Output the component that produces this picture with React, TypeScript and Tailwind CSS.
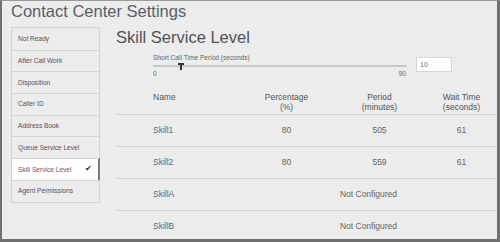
import React from "react";

const navItems = [
  "Not Ready",
  "After Call Work",
  "Disposition",
  "Caller ID",
  "Address Book",
  "Queue Service Level",
  "Skill Service Level",
  "Agent Permissions",
];

const rows: { name: string; pct?: string; period?: string; wait?: string }[] = [
  { name: "Skill1", pct: "80", period: "505", wait: "61" },
  { name: "Skill2", pct: "80", period: "559", wait: "61" },
  { name: "SkillA" },
  { name: "SkillB" },
];

export default function App() {
  return (
    <div
      className="w-[500px] h-[242px] bg-[#ececec] border-t border-t-[#9a9a9a] border-l-2 border-r-[3px] border-b-[3px] border-l-[#707070] border-r-[#707070] border-b-[#707070] overflow-hidden text-[#555]"
      style={{ fontFamily: '"Liberation Sans", Arial, sans-serif' }}
    >
      <div className="pl-[9px] pt-[1px] text-[16.5px] leading-[19px] text-[#56606a]">
        Contact Center Settings
      </div>
      <div className="flex mt-[6px]">
        <div className="ml-[9px] w-[89px] shrink-0 self-start border border-[#d2d2d2] border-r-0">
          {navItems.map((item, i) => {
            const active = item === "Skill Service Level";
            return (
              <div
                key={item}
                className={
                  "h-[21.7px] flex items-center justify-between pl-[6px] pr-[6px] text-[6.6px] " +
                  (i > 0 ? "border-t border-[#d6d6d6] " : "") +
                  (active
                    ? "bg-white text-[#6b5566] border-r-2 border-r-[#7a7a7a]"
                    : "text-[#5d4d5a] border-r border-r-[#d2d2d2]")
                }
              >
                <span>{item}</span>
                {active && <span className="text-[8px] text-[#222]">✔</span>}
              </div>
            );
          })}
        </div>
        <div className="flex-1 ml-[16px]">
          <div className="text-[16.5px] leading-[19px] text-[#4d5359] mt-[1px]">Skill Service Level</div>
          <div className="flex ml-[37px] mt-[7px]">
            <div className="w-[254px]">
              <div className="text-[6.6px] leading-[8px] text-[#666]">Short Call Time Period (seconds)</div>
              <div className="relative h-[7px] mt-[1px]">
                <div className="absolute left-0 right-0 top-[2px] h-[1.5px] bg-[#c8c8c8]" />
                <div className="absolute left-[25px] top-0 w-[6px] h-[2px] bg-[#333]" />
                <div className="absolute left-[27px] top-0 w-[2px] h-[7px] bg-[#333]" />
              </div>
              <div className="flex justify-between text-[6.6px] leading-[8px] text-[#666]">
                <span>0</span>
                <span className="pr-[1px]">90</span>
              </div>
            </div>
            <div className="ml-[9px] mt-[3px] w-[36px] h-[15px] bg-white border border-[#d6d6d6] text-[7px] text-[#666] pl-[3px] leading-[13px]">
              10
            </div>
          </div>
          <div className="mt-[11px] mr-[-3px]">
            <div className="flex h-[26px] border-b border-[#d6d6d6] text-[8.5px] leading-[10px] text-[#555]">
              <div className="w-[119px] pl-[37px] pt-[3px]">Name</div>
              <div className="w-[103px] text-center pt-[3px]">
                Percentage
                <br />
                (%)
              </div>
              <div className="w-[83px] text-center pt-[3px]">
                Period
                <br />
                (minutes)
              </div>
              <div className="flex-1 text-center pt-[3px] pl-[2px]">
                Wait Time
                <br />
                (seconds)
              </div>
            </div>
            {rows.map((r) => (
              <div
                key={r.name}
                className="flex items-center h-[32px] border-b border-[#d6d6d6] text-[8.5px] text-[#666]"
              >
                <div className="w-[119px] pl-[37px]">{r.name}</div>
                {r.pct ? (
                  <>
                    <div className="w-[103px] text-center">{r.pct}</div>
                    <div className="w-[83px] text-center">{r.period}</div>
                    <div className="flex-1 text-center pl-[2px]">{r.wait}</div>
                  </>
                ) : (
                  <div className="flex-1 text-center pl-[2px]">Not Configured</div>
                )}
              </div>
            ))}
          </div>
        </div>
      </div>
    </div>
  );
}
